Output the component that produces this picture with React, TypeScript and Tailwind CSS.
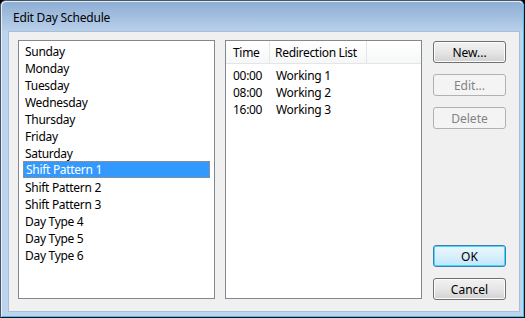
import React from "react";

const days = [
  "Sunday",
  "Monday",
  "Tuesday",
  "Wednesday",
  "Thursday",
  "Friday",
  "Saturday",
  "Shift Pattern 1",
  "Shift Pattern 2",
  "Shift Pattern 3",
  "Day Type 4",
  "Day Type 5",
  "Day Type 6",
];

const rows = [
  ["00:00", "Working 1"],
  ["08:00", "Working 2"],
  ["16:00", "Working 3"],
];

function Btn({
  label,
  disabled,
  def,
}: {
  label: string;
  disabled?: boolean;
  def?: boolean;
}) {
  if (disabled) {
    return (
      <div className="w-[73px] h-[22px] rounded-[3px] border border-[#adb2b5] bg-[#f4f4f4] flex items-center justify-center pt-[1px] text-[#838383]">
        {label}
      </div>
    );
  }
  if (def) {
    return (
      <div className="w-[73px] h-[22px] rounded-[3px] border border-[#3c7fb1] bg-gradient-to-b from-[#eaf6fd] via-[#d9f0fc] to-[#bee6fd] shadow-[inset_0_0_0_1px_#48d8fb] flex items-center justify-center pt-[1px] text-black">
        {label}
      </div>
    );
  }
  return (
    <div className="w-[73px] h-[22px] rounded-[3px] border border-[#707070] bg-gradient-to-b from-[#f2f2f2] via-[#e6e6e6] to-[#d2d2d2] shadow-[inset_0_0_0_1px_#fcfcfc] flex items-center justify-center pt-[1px] text-black">
      {label}
    </div>
  );
}

export default function App() {
  return (
    <div
      className="w-[525px] h-[318px] bg-black"
      style={{ fontFamily: '"Noto Sans", sans-serif' }}
    >
      <div className="w-[525px] h-[318px] rounded-t-[6px] border border-[#4a5866] border-b-[#101418] border-r-[#101418] bg-[#bcd4ee] flex flex-col text-[12px] leading-none">
        <div className="flex-1 flex flex-col rounded-t-[5px] border-l border-t border-[#e4eef8] border-r-[#41c2ee] border-r border-b border-b-[#41c2ee]">
          <div className="h-[29px] shrink-0 flex items-center pl-[11px] pt-[3px] rounded-t-[5px] bg-gradient-to-b from-[#8eaed4] to-[#b8d0ea] text-black text-[12px] tracking-[-0.2px]">
            Edit Day Schedule
          </div>
          <div className="flex-1 flex flex-col px-[6px] pb-[4px] pr-[3px]">
            <div className="flex-1 bg-[#f0f0f0] border border-[#a8bed6] flex pl-[9px] pt-[8px] pb-[11px] pr-[11px] tracking-[-0.3px]">
              <div className="w-[197px] h-[259px] border border-[#828790] bg-white pt-[1px] px-[5px]">
                {days.map((d, i) =>
                  i === 7 ? (
                    <div
                      key={d}
                      className="h-[17px] flex items-center pl-[2px] pt-[1px] bg-[#3399ff] text-white border border-dotted border-[#d08a3a] -mx-[1px]"
                    >
                      {d}
                    </div>
                  ) : (
                    <div key={d} className="h-[17px] flex items-center pl-[1px] pt-[2px] text-black">
                      {d}
                    </div>
                  )
                )}
              </div>
              <div className="ml-[10px] w-[197px] h-[259px] border border-[#828790] bg-white">
                <div className="h-[23px] flex bg-gradient-to-b from-white to-[#f6f7f8] border-b border-[#e5e5e5] text-black">
                  <div className="w-[44px] flex items-center pl-[7px] pt-[1px] border-r border-[#e3e6ea]">
                    Time
                  </div>
                  <div className="w-[97px] flex items-center pl-[5px] pt-[1px] border-r border-[#e3e6ea]">
                    Redirection List
                  </div>
                </div>
                <div className="pt-[2px]">
                  {rows.map(([t, w]) => (
                    <div key={t} className="h-[17px] flex items-center pt-[2px] text-black">
                      <div className="w-[44px] pl-[7px]">{t}</div>
                      <div className="pl-[6px]">{w}</div>
                    </div>
                  ))}
                </div>
              </div>
              <div className="ml-[11px] flex flex-col pt-[1px] tracking-normal">
                <Btn label="New..." />
                <div className="h-[11px]" />
                <Btn label="Edit..." disabled />
                <div className="h-[11px]" />
                <Btn label="Delete" disabled />
                <div className="flex-1" />
                <Btn label="OK" def />
                <div className="h-[11px]" />
                <Btn label="Cancel" />
              </div>
            </div>
          </div>
        </div>
      </div>
    </div>
  );
}
